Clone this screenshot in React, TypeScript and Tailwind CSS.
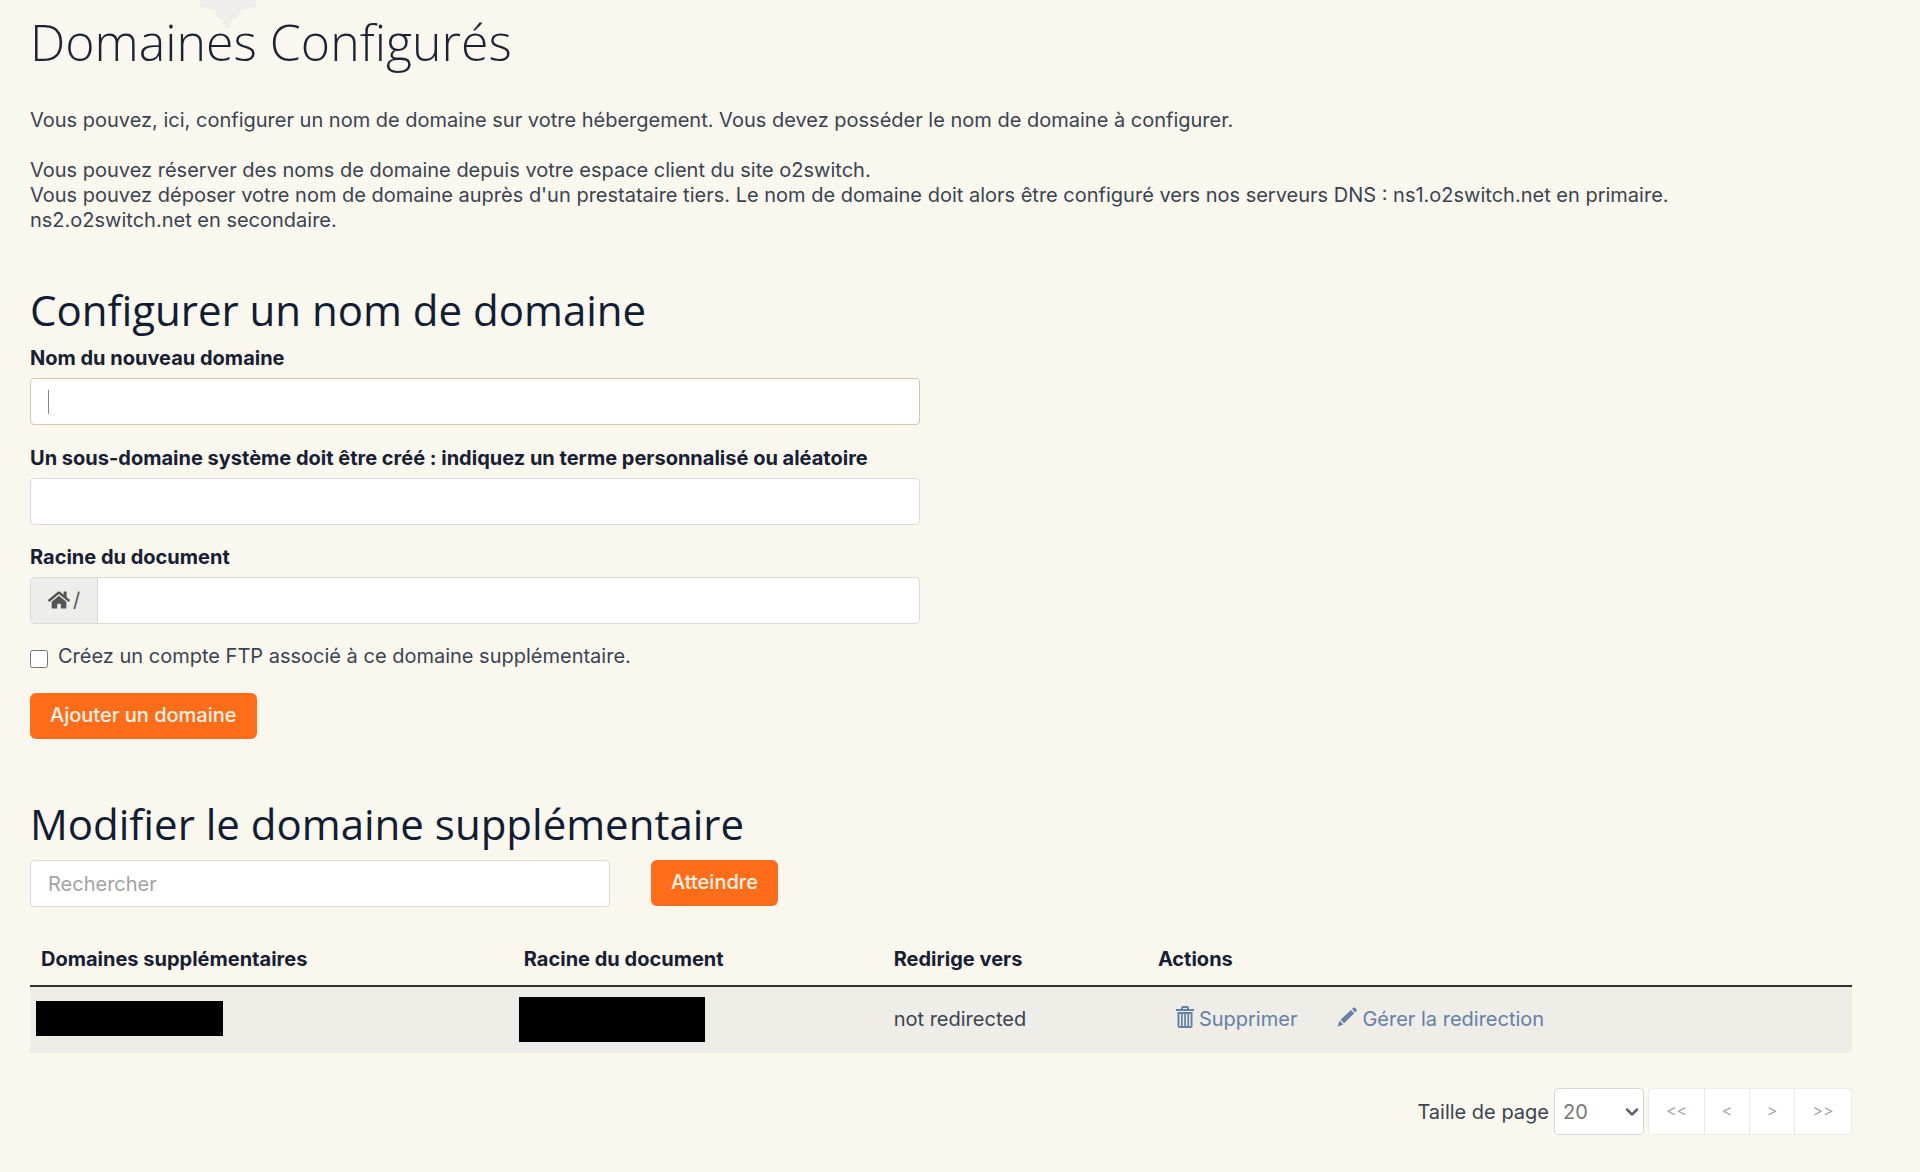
import React, { useState } from 'react';
import { FaHome } from 'react-icons/fa';
import { ChevronDown } from 'lucide-react';

interface Domain {
  id: number;
  redirect: string;
}

const domains: Domain[] = [{ id: 1, redirect: 'not redirected' }];

const TrashIcon: React.FC = () => (
  <svg viewBox="0 0 18 22" className="mb-1 h-[22px] w-[18px]" fill="currentColor" aria-hidden="true">
    <path
      fillRule="evenodd"
      d="M5 3V2Q5 0 7 0h4q2 0 2 2v1h5v2H0V3zM7 3h4V2H7zM1.500 6h15v14q0 2-2 2h-11q-2 0-2-2zM3.500 8v12H5V8zm3.200 0v12h1.500V8zm3.200 0v12h1.500V8zm3.200 0v12h1.500V8z"
    />
  </svg>
);

const PencilIcon: React.FC = () => (
  <svg viewBox="0 0 20 20" className="mb-1 h-5 w-5" fill="currentColor" aria-hidden="true">
    <path d="M15 2l1.300-1.300q.8-.8 1.600 0l1.600 1.600q.8.800 0 1.600L18.200 5.200zM14 3l3.200 3.200L7.200 16.200 3.500 12.700zM2.600 13.800l3.700 3.700L.5 19.800z" />
  </svg>
);

const inputClass =
  'h-[47px] w-full rounded border border-[#dcdad6] bg-white px-[17px] text-[#333a45] focus:outline-none';
const labelClass = 'mb-[7px] block font-bold leading-[25px] text-[#172033]';
const headingClass = "font-['Open_Sans',sans-serif] text-[42px] leading-[46px] text-[#101d33]";
const buttonClass = 'h-[46px] rounded-md bg-[#ff6c1a] px-5 pb-[3px] font-medium text-[#fff4e6] hover:bg-[#e85c0e]';
const pagerClass = 'border-l border-[#e9e9ec] pb-1 text-[#aaaaaa] first:border-l-0';

const App: React.FC = () => {
  const [domain, setDomain] = useState('');
  const [subdomain, setSubdomain] = useState('');
  const [root, setRoot] = useState('');
  const [ftp, setFtp] = useState(false);
  const [search, setSearch] = useState('');
  const [pageSize, setPageSize] = useState('20');

  return (
    <div className="relative min-h-screen bg-[#faf7ee] pr-[68px] pl-[30px] font-[Inter,'Liberation_Sans',sans-serif] text-[20px] text-[#3a4350]">
      <svg viewBox="0 0 56 28" className="absolute top-0 left-[200px] h-7 w-14" aria-hidden="true">
        <path d="M0 0h56v7l-15 3-3 8-6 2-2 8h-6l-2-8-5-3-3-7-14-3z" fill="#f0eeea" />
      </svg>

      <h1 className="relative pt-2 font-['Open_Sans',sans-serif] text-[50px] leading-[68px] font-light text-[#1c2433]">
        Domaines Configurés
      </h1>

      <div className="mt-8 leading-[25px]">
        <p>
          Vous pouvez, ici, configurer un nom de domaine sur votre hébergement. Vous devez posséder le nom de domaine à
          configurer.
        </p>
        <p className="mt-[25px]">
          Vous pouvez réserver des noms de domaine depuis votre espace client du site o2switch.
          <br />
          Vous pouvez déposer votre nom de domaine auprès d'un prestataire tiers. Le nom de domaine doit alors être
          configuré vers nos serveurs DNS : ns1.o2switch.net en primaire.
          <br />
          ns2.o2switch.net en secondaire.
        </p>
      </div>

      <section className="mt-[54px]">
        <h2 className={headingClass}>Configurer un nom de domaine</h2>
        <form className="max-w-[890px]" onSubmit={(e) => e.preventDefault()}>
          <label htmlFor="domain" className={`${labelClass} mt-[13px]`}>
            Nom du nouveau domaine
          </label>
          <div className="relative">
            <input
              id="domain"
              type="text"
              value={domain}
              onChange={(e) => setDomain(e.target.value)}
              className="h-[47px] w-full rounded border border-[#d9c4a8] bg-white px-[17px] text-[#333a45] focus:outline-none"
            />
            {domain === '' && <span className="pointer-events-none absolute top-3 left-[18px] h-6 w-px bg-[#888888]" />}
          </div>

          <label htmlFor="subdomain" className={`${labelClass} mt-[21px]`}>
            Un sous-domaine système doit être créé : indiquez un terme personnalisé ou aléatoire
          </label>
          <input
            id="subdomain"
            type="text"
            value={subdomain}
            onChange={(e) => setSubdomain(e.target.value)}
            className={inputClass}
          />

          <label htmlFor="root" className={`${labelClass} mt-5`}>
            Racine du document
          </label>
          <div className="flex h-[47px] overflow-hidden rounded border border-[#dcdad6] bg-white">
            <span className="flex w-[67px] items-center justify-center gap-[3px] border-r border-[#dcdad6] bg-[#ededec] pb-[2px] text-[#555555]">
              <FaHome className="h-[22px] w-[22px]" />/
            </span>
            <input
              id="root"
              type="text"
              value={root}
              onChange={(e) => setRoot(e.target.value)}
              className="min-w-0 flex-1 px-[17px] text-[#333a45] focus:outline-none"
            />
          </div>

          <div className="mt-5 flex items-center gap-[10px] leading-[25px]">
            <input
              id="ftp"
              type="checkbox"
              checked={ftp}
              onChange={(e) => setFtp(e.target.checked)}
              className="mt-1 h-[18px] w-[18px]"
            />
            <label htmlFor="ftp">Créez un compte FTP associé à ce domaine supplémentaire.</label>
          </div>

          <button type="submit" className={`${buttonClass} mt-6`}>
            Ajouter un domaine
          </button>
        </form>
      </section>

      <section className="mt-[62px]">
        <h2 className={headingClass}>Modifier le domaine supplémentaire</h2>
        <form className="mt-[13px] flex gap-[41px]" onSubmit={(e) => e.preventDefault()}>
          <div className="w-[580px]">
            <input
              type="text"
              aria-label="Rechercher"
              placeholder="Rechercher"
              value={search}
              onChange={(e) => setSearch(e.target.value)}
              className={`${inputClass} placeholder:text-[#a3a3a3]`}
            />
          </div>
          <button type="submit" className={buttonClass}>
            Atteindre
          </button>
        </form>

        <table className="mt-[25px] w-full table-fixed text-left">
          <colgroup>
            <col className="w-[26.5%]" />
            <col className="w-[20.3%]" />
            <col className="w-[14.5%]" />
            <col />
          </colgroup>
          <thead>
            <tr className="h-[54px] border-b-2 border-[#333333] text-[#172033]">
              <th className="px-[11px] font-bold">Domaines supplémentaires</th>
              <th className="px-[11px] font-bold">Racine du document</th>
              <th className="px-[11px] font-bold">Redirige vers</th>
              <th className="px-[11px] font-bold">Actions</th>
            </tr>
          </thead>
          <tbody>
            {domains.map((item) => (
              <tr key={item.id} className="h-[67px] bg-[#eeede8]">
                <td className="px-[6px] pb-[3px]">
                  <div className="h-[35px] w-[187px] bg-black" />
                </td>
                <td className="px-[6px] pb-[2px]">
                  <div className="h-[45px] w-[186px] bg-black" />
                </td>
                <td className="px-[11px] pb-[2px]">{item.redirect}</td>
                <td className="px-[29px] pb-[2px]">
                  <div className="flex gap-10 text-[#6480a5]">
                    <a href="#supprimer" className="flex items-center gap-[5px] hover:underline">
                      <TrashIcon />
                      Supprimer
                    </a>
                    <a href="#redirection" className="flex items-center gap-[5px] hover:underline">
                      <PencilIcon />
                      Gérer la redirection
                    </a>
                  </div>
                </td>
              </tr>
            ))}
          </tbody>
        </table>
      </section>

      <div className="mt-[35px] flex items-center justify-end">
        <label htmlFor="page-size" className="mr-[5px]">
          Taille de page
        </label>
        <div className="relative mr-1 w-[90px]">
          <select
            id="page-size"
            value={pageSize}
            onChange={(e) => setPageSize(e.target.value)}
            className="h-[47px] w-full appearance-none rounded border border-[#d5d7db] bg-white px-2 text-[#777777]"
          >
            <option value="10">10</option>
            <option value="20">20</option>
            <option value="50">50</option>
            <option value="100">100</option>
          </select>
          <ChevronDown
            className="pointer-events-none absolute top-[14px] right-[2px] h-5 w-5 text-[#666666]"
            strokeWidth={3}
            aria-hidden="true"
          />
        </div>
        <div className="flex h-[47px] overflow-hidden rounded border border-[#ececec] bg-white text-base">
          <button type="button" disabled className={`${pagerClass} w-[55px]`}>
            &lt;&lt;
          </button>
          <button type="button" disabled className={`${pagerClass} w-[45px]`}>
            &lt;
          </button>
          <button type="button" disabled className={`${pagerClass} w-[45px]`}>
            &gt;
          </button>
          <button type="button" disabled className={`${pagerClass} w-[57px]`}>
            &gt;&gt;
          </button>
        </div>
      </div>
    </div>
  );
};

export default App;
